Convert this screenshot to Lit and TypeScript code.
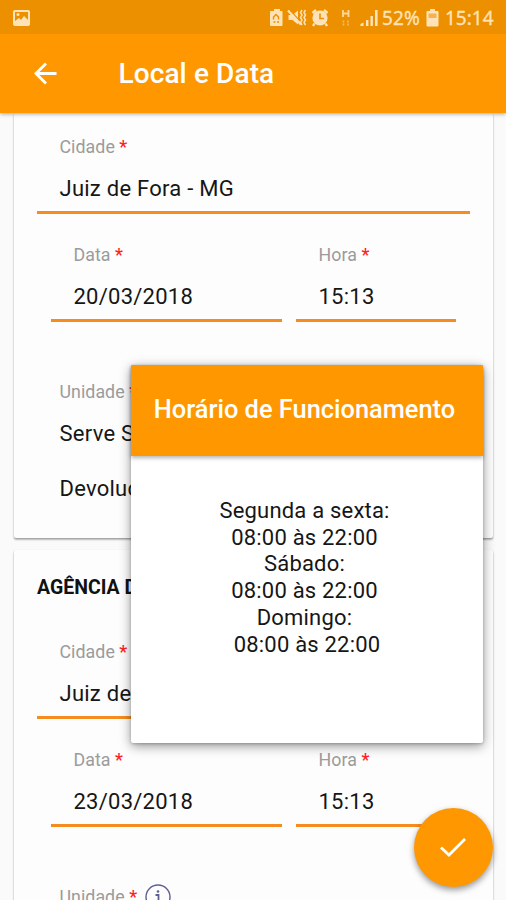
import { LitElement, html, css, svg } from "lit";
import { customElement, property } from "lit/decorators.js";

@customElement("form-field")
class FormField extends LitElement {
  @property() label = "";
  @property() value = "";
  @property({ type: Boolean }) info = false;
  @property({ type: Boolean }) plain = false;

  static styles = css`
    :host { display: block; }
    .field { box-sizing: border-box; height: 77px; padding-left: 22.5px; border-bottom: 3px solid #f68b1f; white-space: nowrap; }
    .plain { border-bottom-color: transparent; height: 66px; }
    .label { display: flex; align-items: center; height: 20px; font-size: 17.8px; line-height: 20px; letter-spacing: 0.05px; color: #9b9b9b; }
    .req { color: #f22; margin-left: 4.5px; font-weight: 500; }
    .value { margin-top: 18px; height: 27px; line-height: 28px; font-size: 22px; letter-spacing: 0.25px; color: #161616; }
    .info { width: 26px; height: 26px; margin: 0 0 1px 8px; flex: none; }
  `;

  render() {
    return html`<div class="field ${this.plain ? "plain" : ""}">
      <div class="label">${this.label}<span class="req">*</span>
        ${this.info
          ? html`<svg class="info" viewBox="0 0 26 26" fill="none" stroke="#5a5f94" stroke-width="1.4">
              <circle cx="13" cy="13" r="12"></circle>
              <path d="M10.5 11h3v8M10 19h7" stroke-width="1.8"></path>
              <circle cx="13" cy="7.5" r="1.3" fill="#5a5f94" stroke="none"></circle>
            </svg>`
          : ""}
      </div>
      <div class="value">${this.value}</div>
    </div>`;
  }
}

const statusIcons = svg`
  <g fill="#ffe3b8">
    <path d="M3 2h2V0h6v2h1.500q1 0 1 1v13q0 1-1 1H2q-1 0-1-1V3q0-1 1-1z"></path>
    <path d="M4.500 10.500V8l2.500-2.500L9.500 8v2.500M4.500 13h2M8 13h2" stroke="#ed9000" stroke-width="1.400" fill="none"></path>
    <path d="M19.500 6h4l5.500-4.500v14L23.500 11h-4z"></path>
    <path d="M20 0l12 13.500" stroke="#ed9000" stroke-width="1.400"></path>
    <path d="M19 1.500l13 14" stroke="#ffe3b8" stroke-width="2.200"></path>
    <path d="M33 1l-1.500 2.500 1.500 2.500-1.500 2.500 1.500 2.500-1.500 2.500 1.500 2.500M36.500 1l-1.500 2.500 1.500 2.500-1.500 2.500 1.500 2.500-1.500 2.500 1.500 2.500" fill="none" stroke="#ffe3b8" stroke-width="1.500"></path>
    <circle cx="51" cy="9" r="7.600"></circle>
    <path d="M43.500 4l3.500-3M58.500 4l-3.500-3M45.500 14.500L44 17M56.500 14.500L58 17" stroke="#ffe3b8" stroke-width="2.400"></path>
    <path d="M51 4.500V9.500h4" fill="none" stroke="#ed9000" stroke-width="1.600"></path>
    <path d="M74 1v7M79.500 1v7M74 4.500h5.500" stroke="#ffd79b" stroke-width="1.800"></path>
    <path d="M74.500 11.500v5M79 11.500v5" stroke="#f8bb62" stroke-width="1.600" stroke-dasharray="2 1"></path>
    <path d="M91.500 17v-2l3-1.500V17zM97 11h2.400v6H97zM101.500 7h2.400v10h-2.400zM106 1h2.600v16H106z"></path>
  </g>`;

@customElement("app-root")
class AppRoot extends LitElement {
  static styles = css`
    :host { display: block; font-family: Roboto, "Liberation Sans", sans-serif; }
    .screen { position: relative; display: flex; flex-direction: column; width: 506px; height: 900px; overflow: hidden; background: #fafafa; }
    .status { flex: none; box-sizing: border-box; height: 34px; padding: 2px 13px 0 12px; display: flex; align-items: center; background: #ed9000; color: #ffe3b8; font-family: "Noto Sans", sans-serif; font-size: 19px; z-index: 2; }
    .photo { width: 19px; height: 18px; margin-right: auto; }
    .signals { width: 109px; height: 18px; }
    .pct { width: 40px; margin-left: 4px; white-space: nowrap; letter-spacing: 0.1px; -webkit-text-stroke: 0.3px #ffe3b8; }
    .battery { width: 13px; height: 18px; margin-left: 4px; }
    .clock { margin-left: 6px; width: 48px; white-space: nowrap; letter-spacing: 0; -webkit-text-stroke: 0.3px #ffe3b8; }
    .bar { flex: none; box-sizing: border-box; height: 79px; padding-left: 34px; display: flex; align-items: center; background: #ff9800; box-shadow: 0 1px 4px rgba(0,0,0,.35); z-index: 1; }
    .back { width: 23px; height: 23px; }
    .bar-title { margin: 0 0 0 61.5px; color: #fff; font-size: 28px; font-weight: 500; line-height: 32px; letter-spacing: 0.1px; }
    .content { flex: 1; min-height: 0; display: flex; flex-direction: column; gap: 12px; padding: 0 13px 0 14px; overflow: hidden; }
    .card { flex: none; box-sizing: border-box; background: #fdfdfd; border-radius: 2px; padding: 0 23px; box-shadow: 0 2px 2px rgba(0,0,0,.2), 0 1px 2px rgba(0,0,0,.24); }
    .first { height: 425px; padding-top: 24px; }
    .second { height: 430px; padding-top: 24px; }
    .heading { margin: 0 0 40px; height: 28px; line-height: 28px; font-size: 19.5px; font-weight: 700; color: #111; white-space: nowrap; }
    .row { display: grid; grid-template-columns: 231px 160px; gap: 14px; padding-left: 14px; margin: 31px 0 60px; }
    .extra { padding-left: 22.5px; height: 28px; line-height: 28px; margin-top: 27px; font-size: 22px; letter-spacing: 0.25px; color: #161616; }
    .dialog { position: absolute; left: 131px; top: 365px; width: 352px; height: 378px; z-index: 3; background: #fff; border-radius: 2px; box-shadow: 0 3px 12px rgba(0,0,0,.42), 0 1px 3px rgba(0,0,0,.2); }
    .dialog-head { height: 91px; display: flex; align-items: center; justify-content: center; padding: 0 5px 3px 0; box-sizing: border-box; background: #ff9800; color: #fff; font-size: 25.4px; font-weight: 500; white-space: nowrap; border-radius: 1px 1px 0 0; box-shadow: 0 2px 4px rgba(0,0,0,.3); }
    .hours { padding: 42px 5px 0 0; text-align: center; font-size: 22px; line-height: 26.7px; letter-spacing: 0.2px; color: #161616; }
    .last { padding-left: 5px; }
    .fab { position: absolute; left: 414px; top: 808px; width: 79px; height: 79px; z-index: 4; border: 0; border-radius: 50%; padding: 0 2px 2px 0; display: grid; place-items: center; background: #ff9800; box-shadow: 0 3px 6px rgba(0,0,0,.4); }
    .check { width: 28px; height: 22px; }
  `;

  render() {
    return html`<div class="screen">
      <div class="status">
        <svg class="photo" viewBox="0 0 19 18"><rect x="1" y="1" width="17" height="16" rx="2" fill="#ffe3b8"></rect><path d="M3 3h13v8l-4-4-3 4-2-2-4 3z" fill="#ed9000"></path><circle cx="6" cy="5.500" r="1.500" fill="#ffe3b8"></circle></svg>
        <svg class="signals" viewBox="0 0 109 18">${statusIcons}</svg>
        <span class="pct">52%</span>
        <svg class="battery" viewBox="0 0 13 18"><path d="M4 0h5v2h2.500q1 0 1 1v13q0 1.500-1 1.500h-10q-1 0-1-1.500V3q0-1 1-1H4z" fill="#ffe3b8"></path><path d="M2.500 4.500h8V9h-8z" fill="#f4b052"></path></svg>
        <span class="clock">15:14</span>
      </div>
      <header class="bar">
        <svg class="back" viewBox="0 0 24 24" fill="none" stroke="#fff" stroke-width="2.900"><path d="M23.500 12H3M12.500 1.500L2 12l10.500 10.500"></path></svg>
        <h1 class="bar-title">Local e Data</h1>
      </header>
      <main class="content">
        <section class="card first">
          <form-field label="Cidade" value="Juiz de Fora - MG"></form-field>
          <div class="row">
            <form-field label="Data" value="20/03/2018"></form-field>
            <form-field label="Hora" value="15:13"></form-field>
          </div>
          <form-field plain label="Unidade" value="Serve Sempre"></form-field>
          <div class="extra">Devolução</div>
        </section>
        <section class="card second">
          <h2 class="heading">AGÊNCIA DESTINO</h2>
          <form-field label="Cidade" value="Juiz de Fora - MG"></form-field>
          <div class="row">
            <form-field label="Data" value="23/03/2018"></form-field>
            <form-field label="Hora" value="15:13"></form-field>
          </div>
          <form-field plain info label="Unidade"></form-field>
        </section>
      </main>
      <div class="dialog" role="dialog">
        <div class="dialog-head">Horário de Funcionamento</div>
        <div class="hours">
          <div>Segunda a sexta:</div>
          <div>08:00 às 22:00</div>
          <div>Sábado:</div>
          <div>08:00 às 22:00</div>
          <div>Domingo:</div>
          <div class="last">08:00 às 22:00</div>
        </div>
      </div>
      <button class="fab" aria-label="Confirmar">
        <svg class="check" viewBox="0 0 28 22" fill="none" stroke="#fff" stroke-width="2.800"><path d="M2 11.500l8 7.500L26 3"></path></svg>
      </button>
    </div>`;
  }
}
